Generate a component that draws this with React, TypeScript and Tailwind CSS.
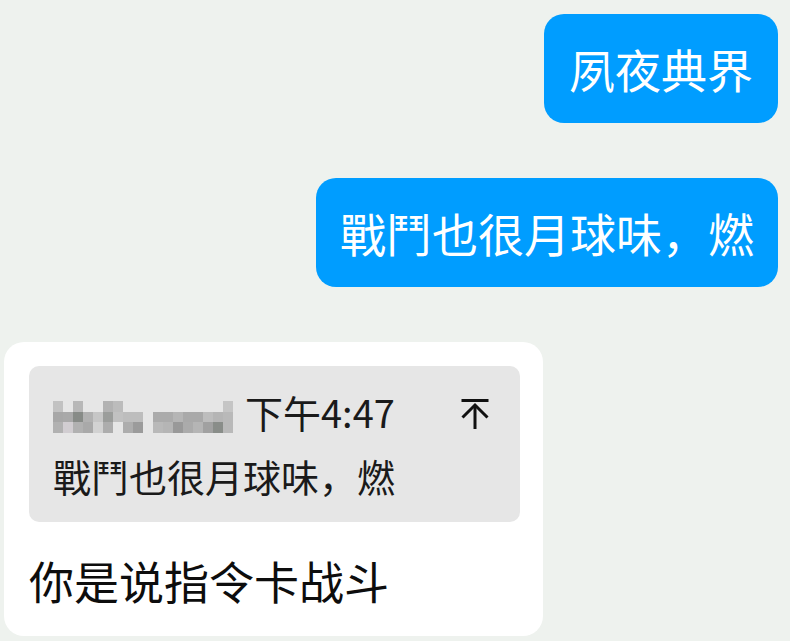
const cjk = { fontFamily: '"Noto Sans CJK SC", "Noto Sans", sans-serif' };

// pixelated sender name, 10px blocks, null = empty
const nameA: (string | null)[][] = [
  ["#c2c2c2", null, "#b8b8b8", null, null, "#b2b2b2", "#bcbcbc", null, null],
  ["#a7a7a7", "#a9a9a9", "#878b87", "#b1b1b1", "#c6c6c6", "#9b9d9b", "#c1c1c1", "#bdbdbd", "#bdbdbd"],
  ["#b1b1b1", "#d1cdd1", "#b1b1b1", "#a9a9a9", "#d2d2d2", "#adadad", null, "#adadad", "#9b9b9b"],
];
const nameB: (string | null)[][] = [
  [null, null, null, null, null, null, null, "#c5c5c5"],
  ["#ababab", "#ababab", "#b5b5b5", "#a9a9a9", "#a9a9a9", "#bdbdbd", "#b5b5b5", "#b9b9b9"],
  ["#b9b9b9", "#b5b5b5", "#999999", "#ababab", "#b5b5b5", "#a1a1a1", "#898d89", "#b9b9b9"],
];

function Pixels({ rows }: { rows: (string | null)[][] }) {
  return (
    <div className="flex flex-col">
      {rows.map((row, i) => (
        <div key={i} className="flex">
          {row.map((c, j) => (
            <div
              key={j}
              className="w-[10px] h-[10.7px]"
              style={{ backgroundColor: c ?? "transparent" }}
            />
          ))}
        </div>
      ))}
    </div>
  );
}

function ToTopIcon() {
  return (
    <svg width="30" height="34" viewBox="0 0 30 34" fill="none" stroke="#111" strokeWidth="3">
      <path d="M1.5 3.5h27" />
      <path d="M15 8v24" />
      <path d="M2.5 20.5 15 8l12.5 12.5" />
    </svg>
  );
}

export default function App() {
  return (
    <div className="w-[790px] h-[641px] bg-[#eef2ee] flex flex-col overflow-hidden" style={cjk}>
      <div className="flex flex-col items-end pr-[12px] pt-[14px] gap-[55px]">
        <div className="bg-[#009dff] text-white rounded-[20px] px-[25px] py-[24px] text-[46px] leading-[61px]">
          夙夜典界
        </div>
        <div className="bg-[#009dff] text-white rounded-[20px] px-[24px] py-[24px] text-[46px] leading-[61px]">
          戰鬥也很月球味，燃
        </div>
      </div>

      <div className="mt-[55px] ml-[4px] w-[539px] bg-white rounded-[20px] pt-[24px] px-[25px] pb-[25px]">
        <div className="bg-[#e6e6e6] rounded-[10px] w-[491px] pl-[24px] pr-[30px] pt-[20px] pb-[20px] text-[#1a1a1a]">
          <div className="flex items-center h-[52px]">
            <div className="flex items-end gap-[10px] mt-[10px]">
              <Pixels rows={nameA} />
              <Pixels rows={nameB} />
            </div>
            <span className="ml-[12px] text-[38px] leading-[52px]">下午4:47</span>
            <div className="ml-auto mt-[4px]">
              <ToTopIcon />
            </div>
          </div>
          <div className="mt-[12px] text-[38px] leading-[52px]">戰鬥也很月球味，燃</div>
        </div>
        <div className="mt-[28px] text-[45px] leading-[61px] text-[#0d0d0d]">你是说指令卡战斗</div>
      </div>
    </div>
  );
}
